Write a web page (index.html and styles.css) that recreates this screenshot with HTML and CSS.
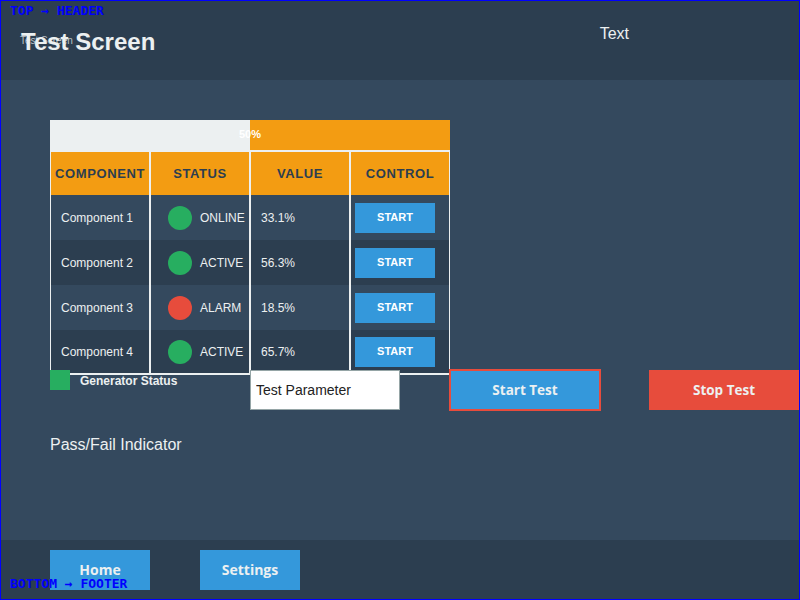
FILE: index.html
```html
<!DOCTYPE html>
<html>
<head>
<meta charset="utf-8">
<title>Test Screen</title>
<link rel="stylesheet" href="styles.css">
</head>
<body>
<div class="frame">
  <header class="header">
    <span class="ghost">Test Screen</span>
    <h1 class="title">Test Screen</h1>
    <span class="header-text">Text</span>
  </header>
  <main class="main">
    <div class="progress">
      <div class="progress-fill" style="width:50%"></div>
      <span class="progress-label">50%</span>
    </div>
    <div class="table">
      <div class="cell head">COMPONENT</div>
      <div class="cell head">STATUS</div>
      <div class="cell head">VALUE</div>
      <div class="cell head">CONTROL</div>

      <div class="cell odd">Component 1</div>
      <div class="cell odd status"><span class="dot green"></span>ONLINE</div>
      <div class="cell odd">33.1%</div>
      <div class="cell odd control"><button class="mini">START</button></div>

      <div class="cell even">Component 2</div>
      <div class="cell even status"><span class="dot green"></span>ACTIVE</div>
      <div class="cell even">56.3%</div>
      <div class="cell even control"><button class="mini">START</button></div>

      <div class="cell odd">Component 3</div>
      <div class="cell odd status"><span class="dot red"></span>ALARM</div>
      <div class="cell odd">18.5%</div>
      <div class="cell odd control"><button class="mini">START</button></div>

      <div class="cell even last">Component 4</div>
      <div class="cell even last status"><span class="dot green"></span>ACTIVE</div>
      <div class="cell even last">65.7%</div>
      <div class="cell even last control"><button class="mini">START</button></div>
    </div>
    <div class="controls">
      <div class="gen"><span class="gen-square"></span><span class="gen-label">Generator Status</span></div>
      <input class="param" type="text" value="Test Parameter">
      <button class="big start">Start Test</button>
      <button class="big stop">Stop Test</button>
    </div>
    <p class="passfail">Pass/Fail Indicator</p>
  </main>
  <footer class="footer">
    <button class="nav">Home</button>
    <button class="nav">Settings</button>
  </footer>
  <span class="tag tag-top">TOP → HEADER</span>
  <span class="tag tag-bottom">BOTTOM → FOOTER</span>
</div>
</body>
</html>
```

FILE: styles.css
```css
* { box-sizing: border-box; }
html, body { margin: 0; padding: 0; }
body {
  width: 800px;
  height: 600px;
  overflow: hidden;
  font-family: "Liberation Sans", Arial, sans-serif;
  background: #34495e;
}
.frame {
  position: relative;
  width: 800px;
  height: 600px;
  display: flex;
  flex-direction: column;
  overflow: hidden;
}
.frame::after {
  content: "";
  position: absolute;
  inset: 0;
  border: 1px solid #0000ff;
  pointer-events: none;
  z-index: 2;
}
.header {
  height: 80px;
  flex: none;
  background: #2c3e50;
  display: flex;
  align-items: center;
  padding: 0 0 0 21px;
}
.ghost {
  position: absolute;
  left: 20px;
  top: 35px;
  font-size: 10px;
  color: #bdc3c7;
}
.title {
  margin: 4px 0 0;
  font-size: 24px;
  font-weight: bold;
  color: #ecf0f1;
  line-height: 28px;
  position: relative;
  z-index: 1;
}
.header-text {
  margin-left: auto;
  margin-right: 171px;
  align-self: flex-start;
  margin-top: 25px;
  font-size: 16px;
  line-height: 18px;
  color: #ecf0f1;
}
.main {
  flex: 1;
  padding: 40px 0 0 50px;
  background: #34495e;
}
.progress {
  position: relative;
  width: 400px;
  height: 30px;
  background: #f39c12;
}
.progress-fill {
  height: 100%;
  background: #ecf0f1;
}
.progress-label {
  position: absolute;
  left: 0;
  right: 0;
  top: 8px;
  text-align: center;
  font-size: 11px;
  font-weight: bold;
  color: #ffffff;
}
.table {
  display: grid;
  grid-template-columns: repeat(4, 100px);
  grid-auto-rows: 45px;
  width: 400px;
}
.cell {
  display: flex;
  align-items: center;
  padding-left: 10px;
  padding-top: 1px;
  border-left: 1px solid #ecf0f1;
  border-right: 1px solid #ecf0f1;
  font-size: 12px;
  color: #ecf0f1;
}
.head {
  background: #f39c12;
  border-top: 2px solid #ecf0f1;
  justify-content: center;
  padding-left: 0;
  padding-top: 0;
  font-size: 13px;
  font-weight: bold;
  letter-spacing: 0.6px;
  color: #2c3e50;
}
.odd { background: #34495e; }
.even { background: #2c3e50; }
.last { border-bottom: 2px solid #ecf0f1; }
.status { padding-left: 17px; gap: 8px; }
.dot {
  width: 24px;
  height: 24px;
  border-radius: 50%;
  flex: none;
}
.green { background: #27ae60; }
.red { background: #e74c3c; }
.control { padding-left: 4px; padding-top: 0; }
.mini {
  width: 80px;
  height: 30px;
  border: none;
  background: #3498db;
  color: #ffffff;
  font-family: "Liberation Sans", Arial, sans-serif;
  font-size: 11px;
  font-weight: bold;
  padding: 0 0 2px;
}
.controls {
  display: grid;
  grid-template-columns: repeat(4, 200px);
  margin-top: -5px;
  height: 40px;
}
.gen {
  display: flex;
  align-items: center;
  gap: 10px;
  height: 20px;
}
.gen-square {
  width: 20px;
  height: 20px;
  background: #27ae60;
}
.gen-label {
  padding-top: 2px;
  font-size: 12px;
  font-weight: bold;
  color: #ecf0f1;
}
.param {
  width: 150px;
  height: 40px;
  margin: 0;
  border: 1px solid #95a5a6;
  background: #ffffff;
  padding: 0 5px;
  font-family: "Liberation Sans", Arial, sans-serif;
  font-size: 14px;
  color: #222222;
}
.big {
  width: 150px;
  height: 40px;
  border: none;
  font-family: "Open Sans", "Noto Sans", sans-serif;
  font-size: 13.5px;
  font-weight: bold;
  color: #ecf0f1;
  padding: 0 0 1px;
}
.start {
  background: #3498db;
  outline: 2px solid #e74c3c;
  outline-offset: -1px;
}
.stop {
  background: #e74c3c;
  margin-left: -1px;
}
.passfail {
  margin: 26px 0 0;
  font-size: 16px;
  line-height: 18px;
  color: #ecf0f1;
}
.footer {
  height: 60px;
  flex: none;
  background: #2c3e50;
  display: flex;
  gap: 50px;
  padding: 10px 50px;
}
.nav {
  width: 100px;
  height: 40px;
  border: none;
  background: #3498db;
  font-family: "Open Sans", "Noto Sans", sans-serif;
  font-size: 14px;
  font-weight: bold;
  color: #ecf0f1;
  padding: 0 0 2px;
}
.tag {
  position: absolute;
  left: 10px;
  z-index: 3;
  font-family: "DejaVu Sans Mono", monospace;
  font-size: 13px;
  font-weight: bold;
  line-height: 16px;
  color: #0000ff;
}
.tag-top { top: 3px; }
.tag-bottom { top: 576px; }
```
